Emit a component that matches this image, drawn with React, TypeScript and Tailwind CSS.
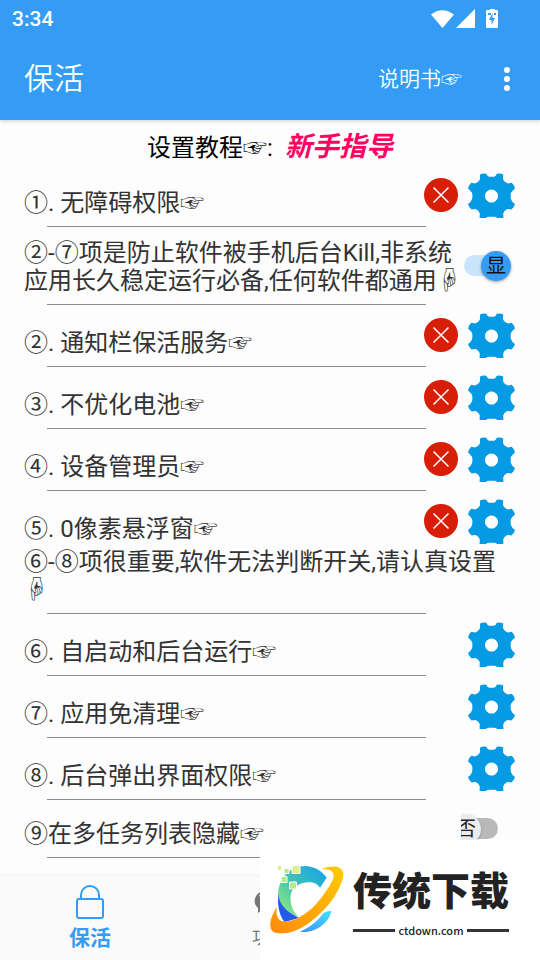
import type { ReactNode } from "react";

const HAND = "☞";

function GearIcon() {
  return (
    <svg width="48" height="46" viewBox="0 0 48 46" aria-hidden="true">
      <path
        fill="#049be4"
        fillRule="evenodd"
        d="M12 1.6 Q15.5 0 18.3 .8 Q19.6 3.7 21 3.7 H26 Q27.8 3.4 28.8 .8 Q32 0 35.3 1.6 Q34.8 4.5 35.2 6.8 Q37 10.2 40 10.6 L43.6 9.8 Q45.6 11 47 15.4 Q43.2 18.6 42.8 20.5 Q42.4 23.5 42.9 26 Q43.8 29 47 31 Q46 34.6 43.4 36.6 Q40.6 35.6 38.8 36.2 Q35.6 38 35.2 40.5 L35.4 45 H29 Q28 43.7 26.5 43.7 H20.5 Q19 43.7 18 45 H11.6 L11.8 40.5 Q11.4 38 8.2 36.2 Q6.4 35.6 3.6 36.6 Q1 34.6 0 31 Q3.2 29 4.1 26 Q4.6 23.5 4.2 20.5 Q3.8 18.6 0 15.4 Q1.4 11 3.4 9.8 L7 10.6 Q10 10.2 11.8 6.8 Q12.2 4.5 12 1.6Z M23.5 16.6 a6.5 6.5 0 1 0 .01 0Z"
      />
    </svg>
  );
}

function DeniedIcon() {
  return (
    <svg width="34" height="34" viewBox="0 0 34 34" role="img" aria-label="未开启">
      <circle cx="17" cy="17" r="17" fill="#d81e06" />
      <path d="M9.5 9.5 24.5 24.5M24.5 9.5 9.5 24.5" stroke="#fff" strokeWidth="1.5" />
    </svg>
  );
}

function Divider() {
  return <hr className="ml-[47px] mr-[114px] h-px border-0 bg-[#8d8d8d]" />;
}

function SettingRow({ label, denied = false, last = false }: { label: string; denied?: boolean; last?: boolean }) {
  return (
    <>
      <div className={last ? "flex h-14 items-start px-6" : "flex h-[61px] items-start px-6"}>
        <span className="mt-6 flex-1 leading-7">{label}</span>
        {denied && (
          <span className="mr-[10px] mt-[13px]">
            <DeniedIcon />
          </span>
        )}
        <button type="button" aria-label={label} className="mt-2">
          <GearIcon />
        </button>
      </div>
      {!last && <Divider />}
    </>
  );
}

function Tab({ active = false, label, children }: { active?: boolean; label: string; children: ReactNode }) {
  return (
    <button
      type="button"
      className={
        active
          ? "flex flex-1 flex-col items-center pt-2 text-[21px] font-bold leading-9 text-[#349cf5]"
          : "flex flex-1 flex-col items-center pt-2 text-lg leading-9 text-[#757575]"
      }
    >
      <span className="flex h-9 items-center">{children}</span>
      {label}
    </button>
  );
}

function Watermark() {
  return (
    <div className="fixed bottom-0 right-0 flex h-[120px] w-[280px] bg-white pl-[9px] text-[#222]">
      <svg className="mt-6 shrink-0" width="76" height="72" viewBox="0 0 76 72" aria-hidden="true">
        <defs>
          <linearGradient id="wm-top" x1="0" y1="1" x2="1" y2="0">
            <stop offset="0" stopColor="#9bf070" />
            <stop offset=".5" stopColor="#3fc2b5" />
            <stop offset="1" stopColor="#12a0f2" />
          </linearGradient>
          <linearGradient id="wm-ring" x1="0" y1="1" x2="1" y2="0">
            <stop offset="0" stopColor="#ff8a0c" />
            <stop offset="1" stopColor="#ffcb05" />
          </linearGradient>
          <linearGradient id="wm-low" x1="0" y1="1" x2="1" y2="0">
            <stop offset="0" stopColor="#3c91f5" />
            <stop offset="1" stopColor="#45e2ff" />
          </linearGradient>
        </defs>
        <path d="M9.300 29 C8.500 40 9.500 50 15.500 58 L30 54 C20 49 12 40 9.300 29Z" fill="#2459ee" />
        <path d="M9.300 30 C9.500 14 21 2 36 2 C45 2 53 7 57.700 13.700 L51 23.700 C48 20 45 18.300 40 18.300 C30 18.300 22 24 21.500 33 C21.300 41 24 48 30 53.500 C18 49 10 40 9.300 30Z" fill="url(#wm-top)" />
        <path d="M31 67.700 C40 64 49 57 54.300 49.300 Q58 46.500 62.500 47 C60 59 46 70 31 67.700Z" fill="url(#wm-low)" />
        <path d="M52.700 5 C58 3 63 2.300 67.700 2.700 C74 4 75.500 9 73.500 15.500 C70 26 64 36 57.700 42.700 C51 50 43 57.500 34.300 62.700 C28 66.500 21 69 14.300 69.300 C7 70 2.500 68 1.700 64 C0 57 4 49 8 42.700 C6.500 50 8 55.500 14 57.500 C24 58.500 33 52 41 46 C48 40 54 32 57.700 26 C62 20 65.500 14 64.500 10 C63 5.500 58 5 52.700 5Z" fill="url(#wm-ring)" />
        <g stroke="#fff">
          <path d="M8.500 1.500h4v5h-4z" fill="#dcef8c" />
          <path d="M15 4.500h5v5h-5z" fill="#b4ea88" />
          <path d="M23 1.500h8v8h-8z" fill="#daf08a" />
          <path d="M12 12.500h6v6h-6z" fill="#b4ea88" />
          <path d="M20.500 18h7v7h-7z" fill="#b4ea88" />
        </g>
      </svg>
      <div className="ml-2 mt-6 flex w-[156px] flex-col items-center">
        <strong className="whitespace-nowrap text-[39px] font-black leading-[56px]">传统下载</strong>
        <div className="flex w-full items-center gap-[3px] text-[11px] font-medium leading-5">
          <span className="h-[3px] flex-1 bg-[#333]" />
          <span className="font-['Noto_Sans_CJK_SC']">ctdown.com</span>
          <span className="h-[3px] flex-1 bg-[#333]" />
        </div>
      </div>
    </div>
  );
}

export default function App() {
  return (
    <div lang="zh-CN" className="flex min-h-screen flex-col bg-[#fdfdfd] font-[Roboto,'Noto_Sans_CJK_SC',sans-serif] text-2xl text-[#333]">
      <header className="relative bg-[#349cf5] text-white shadow-[0_1px_4px_rgba(0,0,0,0.2)]">
        <div className="flex h-9 items-center justify-between pl-3 pr-[42px] pt-px">
          <time className="text-[21px] font-medium">3:34</time>
          <svg width="68" height="20" viewBox="0 0 68 20" fill="#fff" aria-hidden="true">
            <path d="M1 5.5 Q12-3 24 5.5 L12.5 19Z M26 19 45 0V19Z" />
            <path
              fillRule="evenodd"
              d="M57 1h3V0h5v1h2q1 0 1 1v16q0 1-1 1H57q-1 0-1-1V2q0-1 1-1ZM58 4v2h3V4ZM64 4v2h2V4ZM62.500 4 59 11h2.500v5L65 9h-2.500Z"
            />
          </svg>
        </div>
        <div className="flex h-[84px] items-center pl-6 pr-[29px] pt-px">
          <h1 className="flex-1 text-3xl font-[350]">保活</h1>
          <button type="button" className="text-[21px] font-[350]">说明书{HAND}</button>
          <button type="button" aria-label="更多" className="ml-[41px]">
            <svg width="8" height="26" viewBox="0 0 8 26" fill="#fff">
              <circle cx="4" cy="4" r="3" />
              <circle cx="4" cy="13" r="3" />
              <circle cx="4" cy="22" r="3" />
            </svg>
          </button>
        </div>
      </header>

      <main className="flex-1">
        <div className="flex h-[45px] items-center justify-center pt-[10px] text-black">
          <span>设置教程{HAND}:</span>
          <a href="#guide" className="ml-3 text-[27px] font-bold italic text-[#fb0462]">新手指导</a>
        </div>
        <SettingRow label={`①. 无障碍权限${HAND}`} denied />
        <div className="flex h-[77px] items-center pl-6 pr-[29px]">
          <label htmlFor="show-tips" className="flex-1 pt-[2px] leading-7">
            ②-⑦项是防止软件被手机后台Kill,非系统应用长久稳定运行必备,任何软件都通用☟
          </label>
          <span className="relative flex h-[30px] w-[47px] shrink-0 items-center">
            <input
              id="show-tips"
              type="checkbox"
              defaultChecked
              className="h-[21px] w-[42px] appearance-none rounded-full bg-[#c9e5fd]"
            />
            <span className="pointer-events-none absolute right-0 top-0 flex size-[30px] items-center justify-center rounded-full bg-[#349cf5] text-xl leading-none text-[#111] shadow-[0_1px_3px_rgba(0,0,0,0.4)]">
              显
            </span>
          </span>
        </div>
        <Divider />
        <SettingRow label={`②. 通知栏保活服务${HAND}`} denied />
        <SettingRow label={`③. 不优化电池${HAND}`} denied />
        <SettingRow label={`④. 设备管理员${HAND}`} denied />
        <SettingRow label={`⑤. 0像素悬浮窗${HAND}`} denied last />
        <p className="px-6 pb-[9px] pt-px leading-7">⑥-⑧项很重要,软件无法判断开关,请认真设置☟</p>
        <Divider />
        <SettingRow label={`⑥. 自启动和后台运行${HAND}`} />
        <SettingRow label={`⑦. 应用免清理${HAND}`} />
        <SettingRow label={`⑧. 后台弹出界面权限${HAND}`} />
        <div className="flex h-[57px] items-center pl-6 pr-[42px]">
          <label htmlFor="hide-task" className="flex-1 pt-[10px] leading-7">⑨在多任务列表隐藏{HAND}</label>
          <span className="relative flex h-8 w-[37px] items-center justify-end overflow-hidden">
            <input id="hide-task" type="checkbox" className="h-[21px] w-[37px] appearance-none rounded-r-full bg-[#b9b9b9]" />
            <span className="pointer-events-none absolute -left-[10px] top-px flex size-[30px] items-center justify-center rounded-full bg-[#ececec] text-xl leading-none text-[#222] shadow-[0_1px_3px_rgba(0,0,0,0.2)]">
              否
            </span>
          </span>
        </div>
        <Divider />
      </main>

      <nav className="flex h-[84px] bg-[#fafafa] shadow-[0_-1px_3px_rgba(0,0,0,0.06)]">
        <Tab active label="保活">
          <svg width="28" height="36" viewBox="0 0 28 36" fill="none" stroke="#349cf5" strokeWidth="2">
            <rect x="1" y="15" width="26" height="19" rx="2" />
            <path d="M5 15V11a9 9 0 0 1 18 0V15" />
          </svg>
        </Tab>
        <Tab label="功能">
          <svg width="34" height="30" viewBox="0 0 34 30">
            <path d="M11 4a11 10 0 0 0-6 17v5l4-3h5a11 10 0 0 0-3-19Z" fill="#757575" />
            <path d="M6 9l2-1v4" stroke="#fafafa" fill="none" />
          </svg>
        </Tab>
        <span className="flex-1" />
      </nav>
      <Watermark />
    </div>
  );
}
